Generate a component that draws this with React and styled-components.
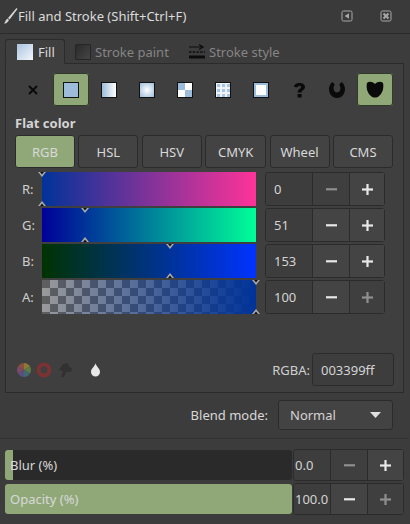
import React from "react";
import styled, { createGlobalStyle } from "styled-components";

const Global = createGlobalStyle`
  html, body { margin: 0; padding: 0; background: #3c3c3c; }
  * { box-sizing: border-box; }
`;
const GREEN = "#90a878";
const LINE = "#2b2b2b";

const Page = styled.div`
  width: 410px; height: 524px; background: #3c3c3c; overflow: hidden;
  font: 13px "Noto Sans", "Open Sans", sans-serif; color: #d8d8d8;
  display: flex; flex-direction: column;
`;
const TitleBar = styled.div`
  height: 34px; flex: none; display: flex; align-items: center; padding: 0 18px 2px 2px;
  border-bottom: 1px solid ${LINE}; background: #3a3a3a;
`;
const TitleText = styled.span`
  color: #dcdcdc; flex: 1; white-space: nowrap;
`;
const TitleIcons = styled.div`display: flex; gap: 27px; align-items: center;`;
const Content = styled.div`padding: 5px 6px 0 5px; display: flex; flex-direction: column;`;
const Tabs = styled.div`display: flex; height: 25px; margin-bottom: -1px; position: relative; z-index: 1;`;
const Tab = styled.div`
  display: flex; align-items: center; gap: ${p => p.$active ? 5 : 4}px; height: 25px;
  padding: ${p => p.$active ? "0 8px 0 11px" : "0 0 0 10px"};
  width: ${p => p.$w}px; white-space: nowrap;
  color: ${p => p.$active ? "#dcdcdc" : "#858585"};
  background: ${p => p.$active ? "#3f3f3f" : "transparent"};
  border: ${p => p.$active ? `1px solid ${LINE}` : "none"};
  border-bottom: ${p => p.$active ? "1px solid #3f3f3f" : "none"};
  border-radius: 3px 3px 0 0;
`;
const FillSwatch = styled.span`
  width: 16px; height: 16px; flex: none; background: linear-gradient(135deg, #a9c3e0, #f4f7fb);
`;
const StrokeSwatch = styled.span`
  width: 16px; height: 16px; flex: none; border: 1px solid #262626; border-radius: 1px;
  background: linear-gradient(135deg, #2a2a2a, #454545);
`;
const Notebook = styled.div`
  height: 330px; border: 1px solid ${LINE}; background: #3f3f3f;
  display: flex; flex-direction: column; padding: 9px 9px 0 9px;
`;
const Toolbar = styled.div`display: grid; grid-template-columns: repeat(10, 36px); column-gap: 2px;`;
const ToolBtn = styled.div`
  height: 33px; display: flex; align-items: center; justify-content: center; border-radius: 3px;
  background: ${p => p.$on ? GREEN : "transparent"};
  box-shadow: ${p => p.$on ? `inset 0 0 0 1px #2f3a28` : "none"};
`;
const Swatch = styled.span`
  width: 16px; height: 16px; display: block; border: 1px solid #111; background: ${p => p.$bg};
`;
const SectionTitle = styled.div`
  font-weight: 700; color: #d4d4d4; margin: 8px 0 3px; line-height: 18px;
`;
const Modes = styled.div`display: grid; grid-template-columns: 60px 60px 60px 61px 60px 60px; column-gap: 3.4px;`;
const Mode = styled.div`
  height: 33px; display: flex; align-items: center; justify-content: center;
  border-radius: 3px; border: 1px solid ${LINE}; color: #d8d8d8;
  background: ${p => p.$on ? GREEN : "#434343"};
`;
const Sliders = styled.div`margin-top: 4px; display: flex; flex-direction: column; gap: 2px;`;
const SliderRow = styled.div`display: flex; height: 34px; align-items: center;`;
const ChannelLabel = styled.div`
  width: 27px; padding-left: 7px; color: #cfcfcf;
`;
const Track = styled.div`
  width: 214px; height: 34px; position: relative; flex: none; background: ${p => p.$bg};
`;
const Thumb = styled.svg`
  position: absolute; left: ${p => p.$pos}%; margin-left: -4px; width: 8px; height: 5px;
  ${p => p.$top ? "top: 0;" : "bottom: 0;"}
`;
const Spin = styled.div`
  display: grid; grid-template-columns: ${p => p.$cols}; height: ${p => p.$h || 34}px; flex: none;
  border: 1px solid ${LINE}; border-radius: 3px; background: #434343;
`;
const SpinValue = styled.div`
  display: flex; align-items: center; padding-left: ${p => p.$pad ?? 8}px; color: #d4d4d4;
  background: #3d3d3d; border-radius: 3px 0 0 3px; white-space: nowrap;
`;
const SpinBtn = styled.div`
  display: flex; align-items: center; justify-content: center; border-left: 1px solid ${LINE};
  color: ${p => p.$off ? "#8f8f8f" : "#e8e8e8"};
  background: ${p => p.$off ? "#3f3f3f" : "#444444"};
`;
const SpinSlot = styled.div`margin-left: 9px;`;
const Bottom = styled.div`display: flex; align-items: center; margin-top: 39px; height: 33px;`;
const CmsIcons = styled.div`display: flex; align-items: center; flex: 1; padding-left: 2px; padding-top: 1px;`;
const RgbaLabel = styled.span`color: #cfcfcf; margin-right: 2px;`;
const RgbaEntry = styled.div`
  width: 82px; height: 33px; display: flex; align-items: center; padding-left: 8px;
  border: 1px solid ${LINE}; border-radius: 3px; color: #d4d4d4; background: #3d3d3d;
`;
const BlendRow = styled.div`
  display: flex; align-items: center; justify-content: flex-end; gap: 10px; height: 30px;
  margin-top: 7px; padding-right: 11px;
`;
const Select = styled.div`
  width: 115px; height: 30px; border: 1px solid ${LINE}; border-radius: 3px; background: #434343;
  display: flex; align-items: center; justify-content: space-between; padding: 0 11px;
  color: #d4d4d4;
`;
const Divider = styled.div`height: 1px; background: #333333; margin: 8px -5px 10px;`;
const ScaleRow = styled.div`display: flex; height: 32px; margin-bottom: 2px; align-items: center;`;
const Scale = styled.div`
  width: 287px; height: 30px; flex: none; border-radius: 3px; background: #2a2a2a; position: relative;
  display: flex; align-items: center; padding-left: 5px; overflow: hidden; color: #d8d8d8;
`;
const ScaleFill = styled.div`
  position: absolute; left: 0; top: 0; bottom: 0; background: ${GREEN};
`;
const ScaleText = styled.span`position: relative;`;
const ScaleSpin = styled.div`margin-left: 1px;`;

const Brush = () => (
  <svg width="16" height="18" viewBox="0 0 16 18">
    <path d="M14.5 1 L6 11 L7.6 12.4 L15.5 2 Z" fill="#d4d4d4" />
    <path d="M5.4 11.6 L7 13 C6 15.5 4 16.6 2 16.6 C3.4 15.4 3.4 13 5.4 11.6 Z" fill="#d4d4d4" />
  </svg>
);
const Back = () => (
  <svg width="12" height="12" viewBox="0 0 12 12">
    <rect x="1" y="1" width="10" height="10" rx="1.5" fill="none" stroke="#a8a8a8" />
    <path d="M8 3.2 V8.8 L3.6 6 Z" fill="#a8a8a8" />
  </svg>
);
const Close = () => (
  <svg width="12" height="12" viewBox="0 0 12 12">
    <rect x="1" y="1" width="10" height="10" rx="1.5" fill="none" stroke="#a8a8a8" />
    <path d="M3.5 3.5 L8.5 8.5 M8.5 3.5 L3.5 8.5" stroke="#a8a8a8" strokeWidth="2" />
  </svg>
);
const StyleIcon = () => (
  <svg width="16" height="16" viewBox="0 0 16 16">
    <path d="M0 3 H13 M10 0.5 L14 3 L10 5.5" stroke="#0c0c0c" strokeWidth="1.2" fill="none" />
    <path d="M0 8 H16" stroke="#111" strokeWidth="1.4" strokeDasharray="2.5 1.2" />
    <rect x="0" y="11.5" width="16" height="3" fill="#0c0c0c" />
  </svg>
);
const Minus = () => <svg width="11" height="11" viewBox="0 0 11 11"><rect y="4.2" width="11" height="2.2" fill="currentColor" /></svg>;
const Plus = () => (
  <svg width="11" height="11" viewBox="0 0 11 11">
    <rect y="4.4" width="11" height="2.2" fill="currentColor" />
    <rect x="4.4" width="2.2" height="11" fill="currentColor" />
  </svg>
);
const ThumbMark = ({ pos, top }) => (
  <Thumb $pos={pos} $top={top} viewBox="0 0 8 5">
    {top
      ? <path d="M0 0 H8 L4 5 Z" fill="#aaa" />
      : <path d="M0 5 H8 L4 0 Z" fill="#aaa" />}
    {top
      ? <path d="M2 0 H6 L4 2.6 Z" fill="#111" />
      : <path d="M2 5 H6 L4 2.4 Z" fill="#111" />}
  </Thumb>
);
const Value = ({ cols, h, pad, value, minusOff, plusOff }) => (
  <Spin $cols={cols} $h={h}>
    <SpinValue $pad={pad}>{value}</SpinValue>
    <SpinBtn $off={minusOff}><Minus /></SpinBtn>
    <SpinBtn $off={plusOff}><Plus /></SpinBtn>
  </Spin>
);

const Checker = "repeating-conic-gradient(#9a9a9a 0 25%, #5f5f5f 0 50%) 0 0 / 16px 16px";
const channels = [
  { l: "R:", v: "0", pos: 0, bg: "linear-gradient(90deg,#003399,#ff3399)", minusOff: true },
  { l: "G:", v: "51", pos: 20, bg: "linear-gradient(90deg,#000099,#00ff99)" },
  { l: "B:", v: "153", pos: 60, bg: "linear-gradient(90deg,#003300,#0033ff)" },
  { l: "A:", v: "100", pos: 100, bg: `linear-gradient(90deg,#00339900,#003399), ${Checker}`, plusOff: true },
];

const Horseshoe = () => (
  <svg width="18" height="18" viewBox="0 0 18 18">
    <path d="M4.5 1 C1.5 3 0.5 7 1.3 10.5 C2.3 15 6 17 9 17 C12 17 15.7 15 16.7 10.5 C17.5 7 16.5 3 13.5 1 L11.2 3.8 C12.6 5.5 12.8 7.8 12 9.5 C11.4 10.8 10.2 11.5 9 11.5 C7.8 11.5 6.6 10.8 6 9.5 C5.2 7.8 5.4 5.5 6.8 3.8 Z" fill="#0a0a0a" />
  </svg>
);
const Heart = () => (
  <svg width="18" height="17" viewBox="0 0 18 17">
    <path d="M1 2 C3 0 6.5 0.5 9 3 C11.5 0.5 15 0 17 2 C18 6 17 12 13 15 C11 17 7 17 5 15 C1 12 0 6 1 2 Z" fill="#0a0a0a" />
  </svg>
);

export default function App() {
  return (
    <Page>
      <Global />
      <TitleBar>
        <Brush />
        <TitleText>Fill and Stroke (Shift+Ctrl+F)</TitleText>
        <TitleIcons><Back /><Close /></TitleIcons>
      </TitleBar>
      <Content>
        <Tabs>
          <Tab $active $w={60}><FillSwatch />Fill</Tab>
          <Tab $w={114}><StrokeSwatch />Stroke paint</Tab>
          <Tab $w={120}><StyleIcon />Stroke style</Tab>
        </Tabs>
        <Notebook>
          <Toolbar>
            <ToolBtn>
              <svg width="10" height="10" viewBox="0 0 10 10"><path d="M1 1 L9 9 M9 1 L1 9" stroke="#0a0a0a" strokeWidth="2" /></svg>
            </ToolBtn>
            <ToolBtn $on><Swatch $bg="#9dbbda" /></ToolBtn>
            <ToolBtn><Swatch $bg="linear-gradient(90deg,#9dbbda,#fff)" /></ToolBtn>
            <ToolBtn><Swatch $bg="radial-gradient(circle,#fff,#9dbbda)" /></ToolBtn>
            <ToolBtn><Swatch $bg="conic-gradient(#fff 0 25%,#9dbbda 0 50%,#fff 0 75%,#9dbbda 0)" /></ToolBtn>
            <ToolBtn><Swatch $bg="radial-gradient(circle at 50% 50%, #a9c4e0 52%, #eef3f9 56%) 0 0 / 5px 5px" /></ToolBtn>
            <ToolBtn><Swatch $bg="linear-gradient(#fff,#fff) 2px 2px / 10px 10px no-repeat, #9dbbda" /></ToolBtn>
            <ToolBtn>
              <svg width="13" height="16" viewBox="0 0 13 16"><path d="M1 5 C1 -0.5 12 -0.5 12 5 C12 8 8.6 8 8.6 10.6 H4.6 C4.6 6.8 8 6.8 8 4.9 C8 3.3 5 3.4 5 5.2 Z" fill="#0a0a0a" /><rect x="4.6" y="12" width="4" height="3.5" fill="#0a0a0a" /></svg>
            </ToolBtn>
            <ToolBtn><Horseshoe /></ToolBtn>
            <ToolBtn $on><Heart /></ToolBtn>
          </Toolbar>
          <SectionTitle>Flat color</SectionTitle>
          <Modes>
            <Mode $on>RGB</Mode><Mode>HSL</Mode><Mode>HSV</Mode><Mode>CMYK</Mode><Mode>Wheel</Mode><Mode>CMS</Mode>
          </Modes>
          <Sliders>
            {channels.map(c => (
              <SliderRow key={c.l}>
                <ChannelLabel>{c.l}</ChannelLabel>
                <Track $bg={c.bg}>
                  <ThumbMark pos={c.pos} top />
                  <ThumbMark pos={c.pos} />
                </Track>
                <SpinSlot>
                  <Value cols="46px 37px 35px" value={c.v} minusOff={c.minusOff} plusOff={c.plusOff} />
                </SpinSlot>
              </SliderRow>
            ))}
          </Sliders>
          <Bottom>
            <CmsIcons>
              <svg width="86" height="16" viewBox="0 0 86 16">
                <path d="M7 8 L7 1 A7 7 0 0 1 13 4.5 Z" fill="#8a7a35" />
                <path d="M7 8 L13 4.5 A7 7 0 0 1 13 11.5 Z" fill="#5f7a45" />
                <path d="M7 8 L13 11.5 A7 7 0 0 1 7 15 Z" fill="#3f6a72" />
                <path d="M7 8 L7 15 A7 7 0 0 1 1 11.5 Z" fill="#5a4f7e" />
                <path d="M7 8 L1 11.5 A7 7 0 0 1 1 4.5 Z" fill="#7e4a6a" />
                <path d="M7 8 L1 4.5 A7 7 0 0 1 7 1 Z" fill="#8a4f3e" />
                <circle cx="27" cy="8" r="5.5" fill="none" stroke="#7a3232" strokeWidth="4" />
                <path d="M46 2 L51 1 L52 5 L55 6 L54 10 L49 10 L47 15 L44 15 L46 9 L42 8 Z" fill="#333030" />
                <path d="M78.5 1 C78.5 4 83 6 83 10 A4.5 4.5 0 0 1 74 10 C74 6 78.5 4 78.5 1 Z" fill="#e8e8e8" />
              </svg>
            </CmsIcons>
            <RgbaLabel>RGBA:</RgbaLabel>
            <RgbaEntry>003399ff</RgbaEntry>
          </Bottom>
        </Notebook>
        <BlendRow>
          <span>Blend mode:</span>
          <Select>
            Normal
            <svg width="11" height="6" viewBox="0 0 11 6"><path d="M0 0 H11 L5.5 6 Z" fill="#e0e0e0" /></svg>
          </Select>
        </BlendRow>
        <Divider />
        <ScaleRow>
          <Scale><ScaleFill style={{ width: "8px" }} /><ScaleText>Blur (%)</ScaleText></Scale>
          <ScaleSpin><Value cols="36px 37px 36px" h={32} pad={1} value="0.0" minusOff /></ScaleSpin>
        </ScaleRow>
        <ScaleRow>
          <Scale><ScaleFill style={{ width: "100%" }} /><ScaleText>Opacity (%)</ScaleText></Scale>
          <ScaleSpin><Value cols="36px 37px 36px" h={32} pad={1} value="100.0" plusOff /></ScaleSpin>
        </ScaleRow>
      </Content>
    </Page>
  );
}
